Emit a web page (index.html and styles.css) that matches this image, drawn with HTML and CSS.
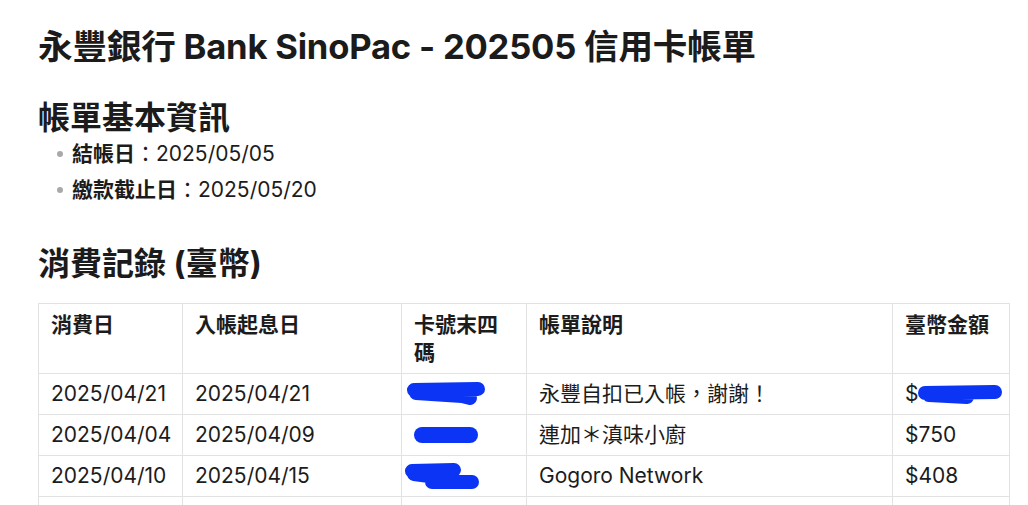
FILE: index.html
```html
<!DOCTYPE html>
<html lang="zh-Hant">
<head>
<meta charset="utf-8">
<title>永豐銀行 Bank SinoPac - 202505 信用卡帳單</title>
<link rel="stylesheet" href="styles.css">
</head>
<body>
<main class="page">
  <h1 class="title">永豐銀行 Bank SinoPac - 202505 信用卡帳單</h1>

  <h2 class="heading">帳單基本資訊</h2>
  <ul class="info">
    <li><strong>結帳日</strong>：2025/05/05</li>
    <li><strong>繳款截止日</strong>：2025/05/20</li>
  </ul>

  <h2 class="heading heading-second">消費記錄 (臺幣)</h2>
  <table class="records">
    <colgroup>
      <col class="c-date">
      <col class="c-post">
      <col class="c-card">
      <col class="c-desc">
      <col class="c-amt">
    </colgroup>
    <thead>
      <tr>
        <th>消費日</th>
        <th>入帳起息日</th>
        <th>卡號末四碼</th>
        <th>帳單說明</th>
        <th>臺幣金額</th>
      </tr>
    </thead>
    <tbody>
      <tr>
        <td>2025/04/21</td>
        <td>2025/04/21</td>
        <td><span class="redact">
          <svg class="blob" width="82" height="28" viewBox="0 0 82 28"><path d="M10 10 L74 9 M12 13 L58 16 L66 18" stroke="#0b34f4" stroke-width="14" stroke-linecap="round" stroke-linejoin="round" fill="none"/></svg>
        </span></td>
        <td>永豐自扣已入帳，謝謝！</td>
        <td class="amt">$<span class="redact">
          <svg class="blob blob-amt" width="86" height="24" viewBox="0 0 86 24"><path d="M8 12 L78 11 M12 14 L50 16" stroke="#0b34f4" stroke-width="14" stroke-linecap="round" stroke-linejoin="round" fill="none"/></svg>
        </span></td>
      </tr>
      <tr>
        <td>2025/04/04</td>
        <td>2025/04/09</td>
        <td><span class="redact redact-2">
          <svg class="blob" width="66" height="20" viewBox="0 0 66 20"><path d="M9 10 L57 10" stroke="#0b34f4" stroke-width="16" stroke-linecap="round" fill="none"/></svg>
        </span></td>
        <td>連加＊滇味小廚</td>
        <td>$750</td>
      </tr>
      <tr>
        <td>2025/04/10</td>
        <td>2025/04/15</td>
        <td><span class="redact">
          <svg class="blob" width="78" height="30" viewBox="0 0 78 30"><path d="M8 9 L50 8 M28 20 L68 20 M10 12 L40 16" stroke="#0b34f4" stroke-width="14" stroke-linecap="round" stroke-linejoin="round" fill="none"/></svg>
        </span></td>
        <td>Gogoro Network</td>
        <td>$408</td>
      </tr>
      <tr>
        <td>&nbsp;</td>
        <td>&nbsp;</td>
        <td>&nbsp;</td>
        <td>&nbsp;</td>
        <td>&nbsp;</td>
      </tr>
    </tbody>
  </table>
</main>
</body>
</html>
```

FILE: styles.css
```css
html, body {
  margin: 0;
  padding: 0;
  background: #ffffff;
}

body {
  font-family: Inter, "Noto Sans CJK TC", "Noto Sans", sans-serif;
  color: #1c1c1c;
}

.page {
  padding: 22px 0 0 38px;
}

.title {
  margin: 0;
  font-size: 34.6px;
  line-height: 48px;
  font-weight: 700;
  letter-spacing: -0.2px;
  color: #1b1b1b;
}

.heading {
  margin: 30px 0 0 0;
  font-size: 32px;
  line-height: 36px;
  font-weight: 700;
  color: #1b1b1b;
}

.heading-second {
  margin-top: 38px;
}

.info {
  list-style: none;
  margin: 0;
  padding: 0 0 0 16px;
}

.info li {
  position: relative;
  padding-left: 18px;
  font-size: 21px;
  line-height: 36px;
}

.info li::before {
  content: "";
  position: absolute;
  left: 3px;
  top: 15px;
  width: 6px;
  height: 6px;
  border-radius: 50%;
  background: #a9a9a9;
}

.info strong {
  font-weight: 700;
}

.records {
  margin-top: 21px;
  border-collapse: collapse;
  table-layout: fixed;
  width: 971px;
  font-size: 21px;
  line-height: 28px;
}

.c-date { width: 144px; }
.c-post { width: 219px; }
.c-card { width: 125px; }
.c-desc { width: 366px; }
.c-amt  { width: 117px; }

.records th,
.records td {
  border: 1px solid #e2e2e2;
  padding: 6px 12px 6px 12px;
  text-align: left;
  vertical-align: top;
  white-space: normal;
}

.records th {
  font-weight: 700;
  padding-top: 7px;
  padding-bottom: 6px;
}

.redact {
  display: inline-block;
  position: relative;
  width: 1px;
  height: 28px;
  vertical-align: top;
}

.blob {
  position: absolute;
  left: -10px;
  top: 0;
}

.redact-2 .blob {
  left: -1px;
  top: 4px;
}

.amt .redact {
  width: 0;
}

.blob-amt {
  left: -1px;
  top: 1px;
}
```
